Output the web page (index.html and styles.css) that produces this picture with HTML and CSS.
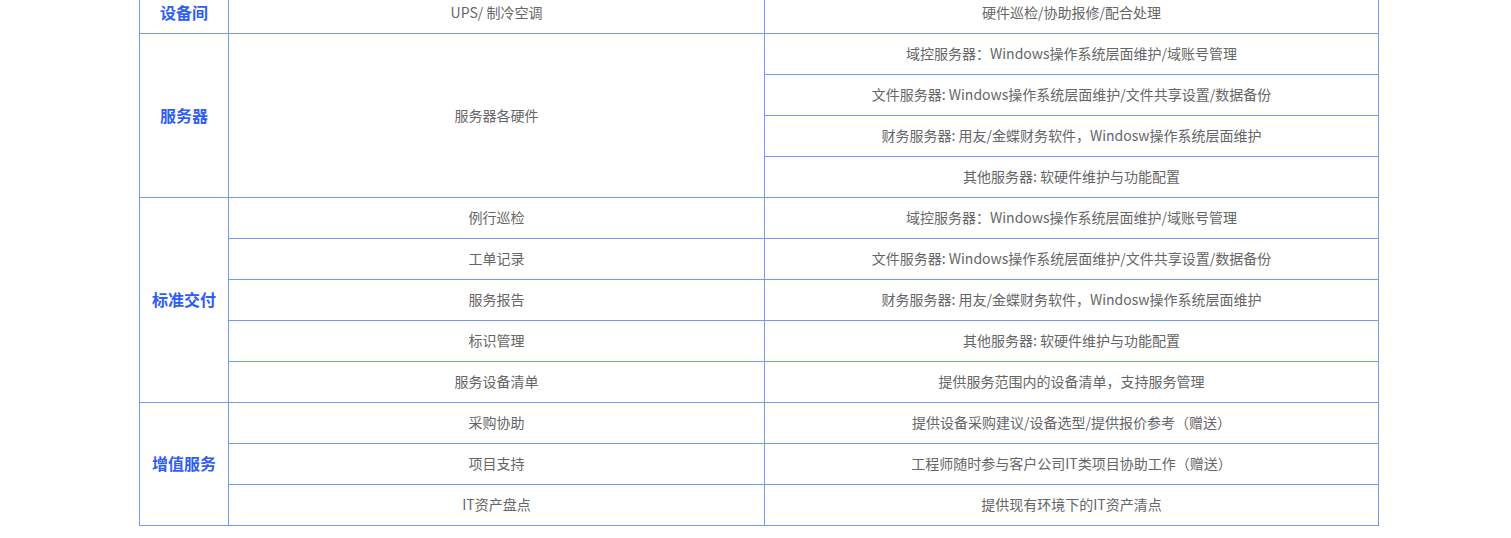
FILE: index.html
```html
<!DOCTYPE html>
<html lang="zh-CN">
<head>
<meta charset="utf-8">
<link rel="stylesheet" href="styles.css">
</head>
<body>
<div class="page">
<table class="svc">
  <colgroup><col class="c1"><col class="c2"><col class="c3"></colgroup>
  <tbody>
    <tr><th>设备间</th><td>UPS/ 制冷空调</td><td>硬件巡检/协助报修/配合处理</td></tr>
    <tr><th rowspan="4">服务器</th><td rowspan="4">服务器各硬件</td><td>域控服务器：Windows操作系统层面维护/域账号管理</td></tr>
    <tr><td>文件服务器: Windows操作系统层面维护/文件共享设置/数据备份</td></tr>
    <tr><td>财务服务器: 用友/金蝶财务软件，Windosw操作系统层面维护</td></tr>
    <tr><td>其他服务器: 软硬件维护与功能配置</td></tr>
    <tr><th rowspan="5">标准交付</th><td>例行巡检</td><td>域控服务器：Windows操作系统层面维护/域账号管理</td></tr>
    <tr><td>工单记录</td><td>文件服务器: Windows操作系统层面维护/文件共享设置/数据备份</td></tr>
    <tr><td>服务报告</td><td>财务服务器: 用友/金蝶财务软件，Windosw操作系统层面维护</td></tr>
    <tr><td>标识管理</td><td>其他服务器: 软硬件维护与功能配置</td></tr>
    <tr><td>服务设备清单</td><td>提供服务范围内的设备清单，支持服务管理</td></tr>
    <tr><th rowspan="3">增值服务</th><td>采购协助</td><td>提供设备采购建议/设备选型/提供报价参考（赠送）</td></tr>
    <tr><td>项目支持</td><td>工程师随时参与客户公司IT类项目协助工作（赠送）</td></tr>
    <tr><td>IT资产盘点</td><td>提供现有环境下的IT资产清点</td></tr>
  </tbody>
</table>
</div>
</body>
</html>
```

FILE: styles.css
```css
html, body {
  margin: 0;
  padding: 0;
  background: #fff;
}
.page {
  padding-left: 139px;
  margin-top: -8px;
}
.svc {
  border-collapse: collapse;
  width: 1239px;
  table-layout: fixed;
  font-family: "Microsoft YaHei", "Noto Sans CJK SC", "Noto Sans", sans-serif;
}
.c1 { width: 89px; }
.c2 { width: 536px; }
.c3 { width: 614px; }
.svc th, .svc td {
  border: 1px solid #7399f5;
  height: 41px;
  padding: 0 0 2px;
  text-align: center;
  vertical-align: middle;
  box-sizing: border-box;
}
.svc th {
  color: #2f5ef3;
  font-size: 16px;
  font-weight: bold;
}
.svc td {
  color: #666;
  font-size: 14px;
}
```
